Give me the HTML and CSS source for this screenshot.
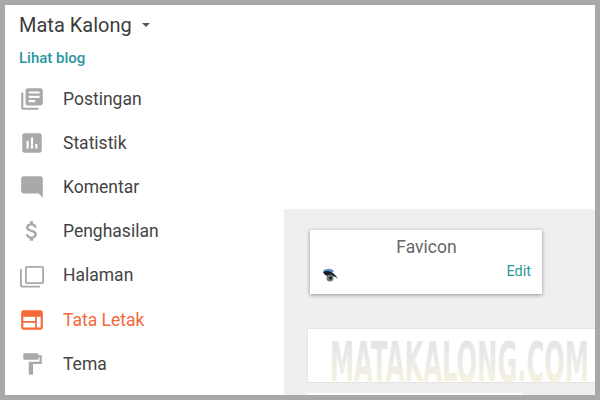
FILE: index.html
```html
<!DOCTYPE html>
<html lang="id">
<head>
    <meta charset="UTF-8">
    <title>Mata Kalong</title>
    <link rel="stylesheet" href="styles.css">
</head>
<body>
    <div class="frame">
        <aside class="sidebar">
            <div class="blog-title">
                <span>Mata Kalong</span>
                <i class="caret"></i>
            </div>
            <a class="view-blog" href="#">Lihat blog</a>
            <nav class="nav">
                <a class="nav-item" href="#">
                    <svg class="nav-icon" viewBox="0 0 24 24"><path d="M4 6H2v14c0 1.1.9 2 2 2h14v-2H4V6zm16-4H8c-1.1 0-2 .9-2 2v12c0 1.1.9 2 2 2h12c1.1 0 2-.9 2-2V4c0-1.1-.9-2-2-2zm-1 9H9V9h10v2zm-4 4H9v-2h6v2zm4-8H9V5h10v2z"/></svg>
                    Postingan
                </a>
                <a class="nav-item" href="#">
                    <svg class="nav-icon" viewBox="0 0 24 24"><path d="M19 3H5c-1.1 0-2 .9-2 2v14c0 1.1.9 2 2 2h14c1.1 0 2-.9 2-2V5c0-1.1-.9-2-2-2zM9 17H7v-7h2v7zm4 0h-2V7h2v10zm4 0h-2v-4h2v4z"/></svg>
                    Statistik
                </a>
                <a class="nav-item" href="#">
                    <svg class="nav-icon" viewBox="0 0 24 24"><path d="M21.99 4c0-1.1-.89-2-1.99-2H4c-1.1 0-2 .9-2 2v12c0 1.1.9 2 2 2h14l4 4-.01-18z"/></svg>
                    Komentar
                </a>
                <a class="nav-item" href="#">
                    <svg class="nav-icon" viewBox="0 0 24 24"><path d="M11.8 10.9c-2.27-.59-3-1.2-3-2.15 0-1.09 1.01-1.85 2.7-1.85 1.78 0 2.44.85 2.5 2.1h2.21c-.07-1.72-1.12-3.3-3.21-3.81V3h-3v2.16c-1.94.42-3.5 1.68-3.5 3.61 0 2.31 1.91 3.46 4.7 4.13 2.5.6 3 1.48 3 2.41 0 .69-.49 1.79-2.7 1.79-2.06 0-2.87-.92-2.98-2.1h-2.2c.12 2.19 1.76 3.42 3.68 3.83V21h3v-2.15c1.95-.37 3.5-1.5 3.5-3.55 0-2.84-2.43-3.81-4.7-4.4z"/></svg>
                    Penghasilan
                </a>
                <a class="nav-item" href="#">
                    <svg class="nav-icon nav-icon-line" viewBox="0 0 26 26">
                        <rect x="6.900" y="4.900" width="17.200" height="16.200" rx="1"/>
                        <path d="M1.900 7v16.100c0 1 .6 1.600 1.600 1.600H21"/>
                    </svg>
                    Halaman
                </a>
                <a class="nav-item active" href="#">
                    <svg class="nav-icon" viewBox="0 0 24 24"><path fill-rule="evenodd" d="M4 3h16c1.100 0 2 .9 2 2v14c0 1.100-.9 2-2 2H4c-1.100 0-2-.9-2-2V5c0-1.100.9-2 2-2zm0 6v4h11V9H4zm0 5.500V19h11v-4.500H4zM16.500 9v10H20V9h-3.500z"/></svg>
                    Tata Letak
                </a>
                <a class="nav-item" href="#">
                    <svg class="nav-icon" viewBox="0 0 24 24"><path d="M18 4V3c0-.55-.45-1-1-1H5c-.55 0-1 .45-1 1v4c0 .55.45 1 1 1h12c.55 0 1-.45 1-1V6h1v4H9v11c0 .55.45 1 1 1h2c.55 0 1-.45 1-1v-9h8V4h-3z"/></svg>
                    Tema
                </a>
            </nav>
        </aside>
        <main class="main">
            <div class="layout">
                <section class="gadget">
                    <h2 class="gadget-title">Favicon</h2>
                    <div class="gadget-row">
                        <svg class="favicon" viewBox="0 0 16 16">
                            <path fill="#5b8fc9" d="M1 4 C4 1 9 1 12 4 L10 6 L3 6 Z"/>
                            <path fill="#14202c" d="M1 5 C5 3 10 4 14 9 L16 12 C13 9 11 9 9 9 L5 9 L2 7 Z"/>
                            <circle fill="#6f7a78" cx="8" cy="11" r="3.500"/>
                            <circle fill="#1b1f22" cx="8.500" cy="11" r="1.500"/>
                        </svg>
                        <a class="edit-link" href="#">Edit</a>
                    </div>
                </section>
                <section class="banner">
                    <svg class="banner-art" width="262" height="44" viewBox="0 0 262 18" preserveAspectRatio="none">
                        <defs>
                            <linearGradient id="bannerFade" x1="0" y1="0" x2="0" y2="1">
                                <stop offset="0" stop-color="#e0e2ec"/>
                                <stop offset="0.5" stop-color="#ebebe6"/>
                                <stop offset="1" stop-color="#fdf7da"/>
                            </linearGradient>
                        </defs>
                        <text class="banner-text" x="1" y="17.200" textLength="259" lengthAdjust="spacingAndGlyphs" fill="url(#bannerFade)">MATAKALONG.COM</text>
                    </svg>
                </section>
                <section class="next-gadget"></section>
            </div>
        </main>
    </div>
</body>
</html>
```
FILE: styles.css
```css
* {
    box-sizing: border-box;
}
body {
    margin: 0;
    font-family: 'Roboto', sans-serif;
    background-color: #ffffff;
}
a {
    text-decoration: none;
}
.frame {
    display: flex;
    width: 600px;
    height: 400px;
    border: 5px solid #a8a8a8;
    background-color: #ffffff;
    overflow: hidden;
}
.sidebar {
    width: 279px;
    flex-shrink: 0;
    padding: 8px 0 0 14px;
}
.blog-title {
    display: flex;
    align-items: center;
    height: 24px;
    font-size: 20px;
    color: #3c3c3c;
}
.caret {
    width: 0;
    height: 0;
    margin-left: 10px;
    border-left: 4.5px solid transparent;
    border-right: 4.5px solid transparent;
    border-top: 4.5px solid #555555;
}
.view-blog {
    display: block;
    margin-top: 12px;
    font-size: 15px;
    font-weight: 500;
    line-height: 18px;
    color: #2a96a3;
}
.nav {
    margin-top: 10px;
}
.nav-item {
    display: flex;
    align-items: center;
    gap: 18px;
    height: 44.1px;
    font-size: 17.5px;
    color: #444444;
}
.nav-icon {
    width: 26px;
    height: 26px;
    fill: #a9a9a9;
    flex-shrink: 0;
}
.nav-icon-line {
    fill: none;
    stroke: #a9a9a9;
    stroke-width: 1.8;
}
.nav-item.active {
    color: #f4683a;
}
.nav-item.active .nav-icon {
    fill: #f4683a;
}
.main {
    flex: 1;
    padding-top: 204px;
    min-width: 0;
}
.layout {
    height: 100%;
    padding: 21px 0 0 23px;
    background-color: #efefef;
    overflow: hidden;
}
.gadget {
    width: 232px;
    height: 64px;
    padding: 7px 11px 0 12px;
    margin-left: 3px;
    background-color: #ffffff;
    box-shadow: 0 1px 4px rgba(0, 0, 0, 0.4);
}
.gadget-title {
    margin: 0;
    font-size: 17.5px;
    font-weight: 400;
    line-height: 20px;
    text-align: center;
    color: #666666;
}
.gadget-row {
    display: flex;
    align-items: flex-end;
    justify-content: space-between;
    margin-top: 6px;
}
.favicon {
    width: 16px;
    height: 16px;
}
.edit-link {
    margin-bottom: 3px;
    font-size: 14.5px;
    color: #2a9a98;
}
.banner {
    height: 55px;
    margin-top: 34px;
    padding: 10px 0 0 21px;
    background-color: #ffffff;
    border: 1px solid #e4e4e4;
    border-right: none;
}
.banner-art {
    display: block;
    overflow: visible;
}
.banner-text {
    font-family: 'DejaVu Sans', sans-serif;
    font-size: 22.5px;
    font-weight: 700;
}
.next-gadget {
    width: 215px;
    height: 20px;
    margin-top: 10px;
    background-color: #ffffff;
}
```
